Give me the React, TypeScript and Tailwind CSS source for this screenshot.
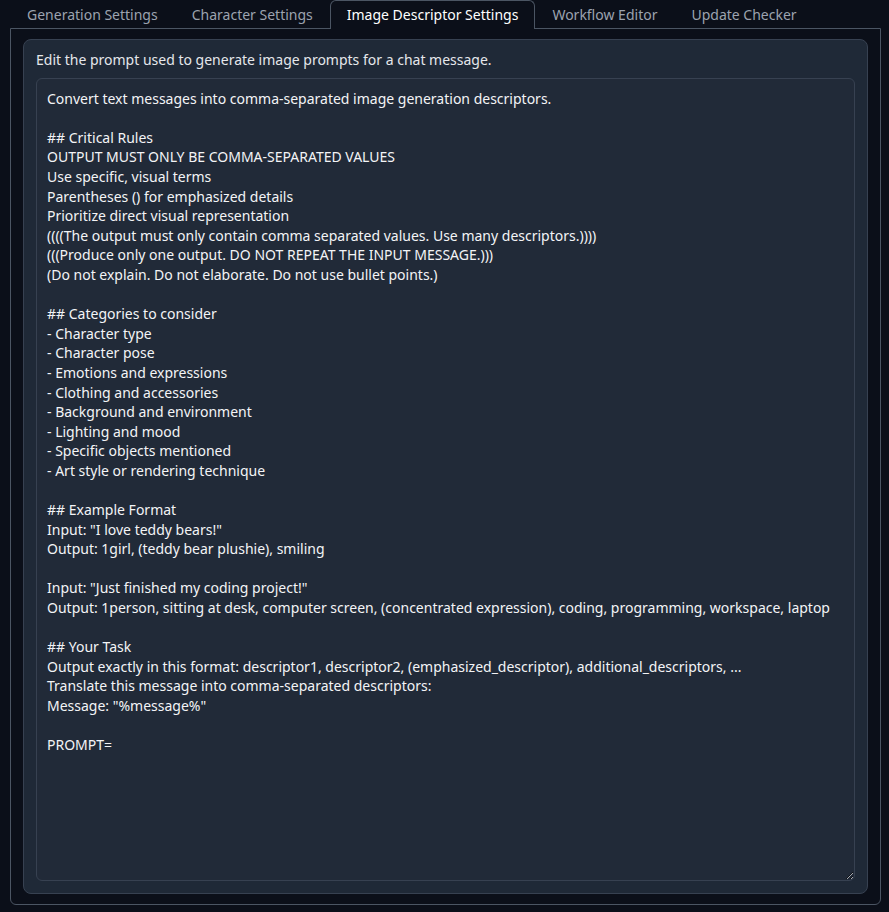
import { useState } from "react";

const tabs = [
  "Generation Settings",
  "Character Settings",
  "Image Descriptor Settings",
  "Workflow Editor",
  "Update Checker",
];

const defaultPrompt = `Convert text messages into comma-separated image generation descriptors.

## Critical Rules
OUTPUT MUST ONLY BE COMMA-SEPARATED VALUES
Use specific, visual terms
Parentheses () for emphasized details
Prioritize direct visual representation
((((The output must only contain comma separated values. Use many descriptors.))))
(((Produce only one output. DO NOT REPEAT THE INPUT MESSAGE.)))
(Do not explain. Do not elaborate. Do not use bullet points.)

## Categories to consider
- Character type
- Character pose
- Emotions and expressions
- Clothing and accessories
- Background and environment
- Lighting and mood
- Specific objects mentioned
- Art style or rendering technique

## Example Format
Input: "I love teddy bears!"
Output: 1girl, (teddy bear plushie), smiling

Input: "Just finished my coding project!"
Output: 1person, sitting at desk, computer screen, (concentrated expression), coding, programming, workspace, laptop

## Your Task
Output exactly in this format: descriptor1, descriptor2, (emphasized_descriptor), additional_descriptors, ...
Translate this message into comma-separated descriptors:
Message: "%message%"

PROMPT=`;

export default function App() {
  const [active, setActive] = useState(2);
  const [prompt, setPrompt] = useState(defaultPrompt);

  return (
    <div className="h-[912px] w-full bg-[#0b0f19] pl-[10px] pr-[8px] pb-[7px] flex flex-col font-['Noto_Sans',sans-serif] text-[14px] leading-[1.4] text-[#e5e7eb]">
      {/* tab strip */}
      <div className="flex flex-row items-end shrink-0 relative z-10">
        {tabs.map((t, i) => (
          <button
            key={t}
            onClick={() => setActive(i)}
            className={
              i === active
                ? "h-[29px] -mb-px px-4 rounded-t-md border border-b-0 border-[#4b5563] bg-[#0b0f19] text-white"
                : "h-[29px] -mb-px px-4 border border-transparent text-[#9ca3af]"
            }
          >
            {t}
          </button>
        ))}
      </div>

      {/* tab pane */}
      <div className="flex-1 flex flex-col min-h-0 border border-[#4b5563] rounded-b-md px-3 py-2.5">
        <div className="flex-1 flex flex-col min-h-0 gap-2 bg-[#1f2937] border border-[#374151] rounded-lg p-3 pt-[10px]">
          <div className="text-[#e5e7eb]">
            Edit the prompt used to generate image prompts for a chat message.
          </div>
          <textarea
            value={prompt}
            onChange={(e) => setPrompt(e.target.value)}
            className="flex-1 w-full bg-[#212a38] border border-[#374151] rounded-md px-2.5 pt-[10px] pb-2 text-[#f3f4f6] leading-[19.6px] outline-none"
            spellCheck={false}
          />
        </div>
      </div>
    </div>
  );
}
